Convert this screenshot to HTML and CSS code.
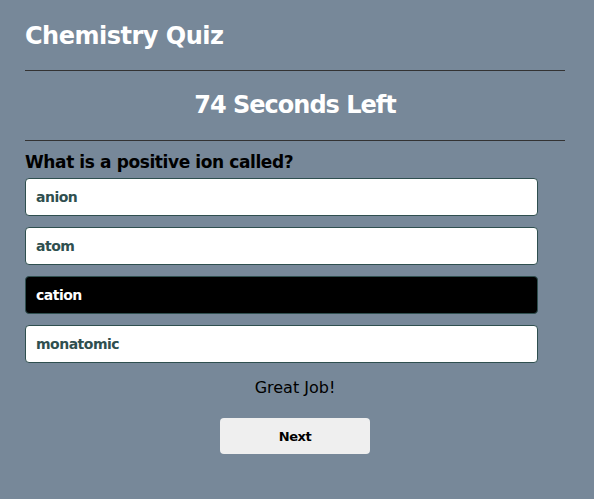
FILE: index.html
```html
<!DOCTYPE html>
<html>
<head>
<meta charset="utf-8">
<link rel="stylesheet" href="styles.css">
</head>
<body>
<div class="quiz">
  <h1 class="title">Chemistry Quiz</h1>
  <hr class="rule">
  <h2 class="timer">74 Seconds Left</h2>
  <hr class="rule">
  <h3 class="question">What is a positive ion called?</h3>
  <div class="options">
    <button class="option">anion</button>
    <button class="option">atom</button>
    <button class="option option-selected">cation</button>
    <button class="option">monatomic</button>
  </div>
  <p class="feedback">Great Job!</p>
  <div class="next-row"><button class="next">Next</button></div>
</div>
</body>
</html>
```
FILE: styles.css
```css
html, body {
  margin: 0;
  padding: 0;
  background: #778899;
  height: 100%;
}
body {
  font-family: "DejaVu Sans", sans-serif;
}
.quiz {
  width: 540px;
  padding: 0 0 0 25px;
}
.title {
  margin: 0;
  padding: 22px 0 20px;
  font-size: 24px;
  font-weight: bold;
  letter-spacing: -0.5px;
  color: #fff;
  line-height: 28px;
}
.rule {
  margin: 0;
  border: 0;
  height: 1px;
  background: #333;
}
.timer {
  margin: 0;
  height: 69px;
  line-height: 69px;
  text-align: center;
  font-size: 24px;
  letter-spacing: -1px;
  color: #fff;
}
.question {
  margin: 0;
  padding-top: 10px;
  font-size: 17px;
  letter-spacing: -0.4px;
  line-height: 22px;
  color: #000;
}
.options {
  display: flex;
  flex-direction: column;
  gap: 11px;
  margin-top: 5px;
  width: 513px;
}
.option {
  height: 38px;
  text-align: left;
  padding: 0 10px;
  font-family: "DejaVu Sans", sans-serif;
  font-size: 14px;
  font-weight: bold;
  letter-spacing: -0.5px;
  color: #2f4f4f;
  background: #fff;
  border: 1px solid #2f4f4f;
  border-radius: 4px;
}
.option-selected {
  background: #000;
  color: #fff;
}
.feedback {
  margin: 15px 0 0;
  text-align: center;
  font-size: 16px;
  line-height: 20px;
  color: #000;
}
.next-row {
  display: flex;
  justify-content: center;
  margin-top: 20px;
}
.next {
  width: 150px;
  height: 36px;
  border: 0;
  border-radius: 4px;
  background: #efefef;
  font-family: "DejaVu Sans", sans-serif;
  font-size: 13px;
  font-weight: bold;
  letter-spacing: -0.5px;
  color: #000;
}
```
